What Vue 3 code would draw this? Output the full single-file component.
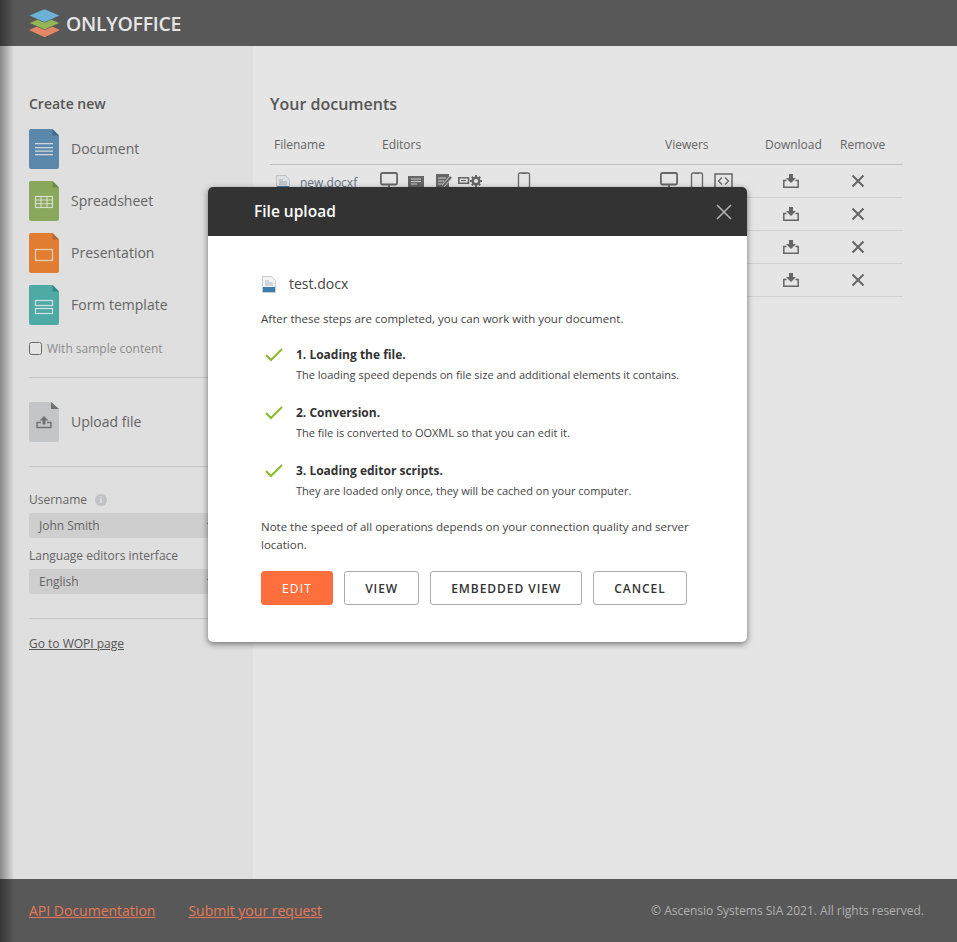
<template>
  <div class="page">
    <header class="top-bar">
      <svg class="logo-mark" width="31" height="29" viewBox="0 0 31 29">
        <path d="M15.500 14.500 1 20.500c-.7.3-.7.7 0 1L14.500 27.800c.6.2 1.400.2 2 0L30 21.500c.7-.3.7-.7 0-1z" fill="#ff9670" />
        <path d="M15.500 7.500 1 13.500c-.7.3-.7.7 0 1L14.500 20.300c.6.2 1.400.2 2 0L30 14.500c.7-.3.7-.7 0-1z" fill="#a4c95e" stroke="#626262" stroke-width=".7" />
        <path d="M14.500.3 1 6c-.7.3-.7.8 0 1.100L14.500 13c.6.2 1.400.2 2 0L30 7.100c.7-.3.7-.8 0-1.100L16.500.3c-.6-.2-1.400-.2-2 0z" fill="#78c6ee" stroke="#626262" stroke-width=".7" />
      </svg>
      <span class="logo-text">ONLYOFFICE</span>
    </header>

    <main class="content">
      <aside class="sidebar">
        <h2 class="side-title">Create new</h2>
        <a v-for="item in createItems" :key="item.name" class="create-row">
          <svg width="30" height="40" viewBox="0 0 30 40">
            <path d="M2 0h21.500L30 6.500V38a2 2 0 0 1-2 2H2a2 2 0 0 1-2-2V2a2 2 0 0 1 2-2z" :fill="item.color" />
            <path d="M23.500 0 30 6.500h-6.500z" :fill="item.fold" />
            <g v-if="item.name === 'Document'" fill="#e6eef4">
              <rect x="6" y="14" width="18" height="1.300" />
              <rect x="6" y="18" width="18" height="1.300" />
              <rect x="6" y="21.500" width="18" height="1.300" />
              <rect x="6" y="25" width="18" height="1.300" />
            </g>
            <g v-else-if="item.name === 'Spreadsheet'" fill="none" stroke="#f2f6e6" stroke-width="1.100">
              <rect x="6.500" y="15.500" width="17" height="11" />
              <path d="M6.500 19h17M6.500 22.800h17M12 15.500v11M18 15.500v11" />
            </g>
            <rect v-else-if="item.name === 'Presentation'" x="6.500" y="16.500" width="17" height="11" fill="none" stroke="#ffe6cc" stroke-width="1.300" />
            <g v-else fill="none" stroke="#eafaf8" stroke-width="1.200">
              <rect x="6.500" y="15.500" width="17" height="5" />
              <rect x="6.500" y="23.500" width="17" height="5" />
            </g>
          </svg>
          <span>{{ item.name }}</span>
        </a>
        <label class="sample-row">
          <input type="checkbox" />
          <span>With sample content</span>
        </label>
        <hr class="side-line first-line" />
        <a class="create-row upload-row">
          <svg width="30" height="40" viewBox="0 0 30 40">
            <path d="M2 0h20.500L30 7v31a2 2 0 0 1-2 2H2a2 2 0 0 1-2-2V2a2 2 0 0 1 2-2z" fill="#d9dbde" />
            <path d="M22 0 30 7h-8z" fill="#7e7e7e" />
            <path d="M15 14l4.500 4.500h-3v4h-3v-4h-3z" fill="#7e7e7e" />
            <path d="M12 20.500H8v5h14v-5H18" fill="none" stroke="#7e7e7e" stroke-width="1.400" />
          </svg>
          <span>Upload file</span>
        </a>
        <hr class="side-line" />
        <div class="field-label user-label">
          Username
          <span class="info-dot">i</span>
        </div>
        <div class="fake-select">John Smith</div>
        <div class="field-label">Language editors interface</div>
        <div class="fake-select">English</div>
        <hr class="side-line last-line" />
        <a class="wopi-link">Go to WOPI page</a>
      </aside>

      <section class="documents">
        <h2 class="docs-title">Your documents</h2>
        <table class="docs-table">
          <thead>
            <tr>
              <th class="col-name">Filename</th>
              <th class="col-editors">Editors</th>
              <th class="col-viewers">Viewers</th>
              <th class="col-download">Download</th>
              <th class="col-remove">Remove</th>
            </tr>
          </thead>
          <tbody>
            <tr v-for="(doc, i) in documents" :key="i">
              <td>
                <div class="cell name-cell">
                  <svg v-if="doc" width="14" height="17" viewBox="0 0 14 17">
                    <path d="M.5.500h9l4 4v12H.5z" fill="#f8f9fa" stroke="#d4d8dc" />
                    <rect x="1" y="11" width="12" height="5" fill="#4088c0" />
                    <path d="M3 5h4M3 7h8M3 9h8" stroke="#b4c0c9" />
                  </svg>
                  <span v-if="doc">{{ doc }}</span>
                </div>
              </td>
              <td>
                <div class="cell editors-cell">
                  <svg width="20" height="20" viewBox="0 0 20 20"><rect x=".9" y="1" width="16.200" height="11.500" rx="1.500" fill="none" stroke="#717171" stroke-width="1.800" /><path d="M9 13v3M5 16h8" stroke="#717171" stroke-width="1.800" /></svg>
                  <svg width="18" height="20" viewBox="0 0 18 20"><path d="M1 4h16v11H1z" fill="#717171" /><path d="M4 7h10M4 9.500h10M4 12h6" stroke="#e5e5e5" /></svg>
                  <svg class="note-icon" width="18" height="20" viewBox="0 0 18 20"><path d="M1 2h13v14H1z" fill="#717171" /><path d="M3 6h8M3 9h6M3 12h4" stroke="#e5e5e5" /><path d="M8 14l8-9" stroke="#e5e5e5" stroke-width="3.500" /><path d="M8 14l8-9" stroke="#717171" stroke-width="2" /></svg>
                  <svg class="macro-icon" width="26" height="20" viewBox="0 0 26 20"><path d="M.8 5.800h9.700v5.400H.8z" fill="none" stroke="#717171" stroke-width="1.600" /><path d="M3 8.500h5" stroke="#717171" stroke-width="1.200" /><circle cx="18" cy="9" r="3.300" fill="none" stroke="#717171" stroke-width="2.400" /><path d="M18 3v2.500M18 12.500V15M12 9h2.500M21.500 9H24M13.800 4.800l1.700 1.700M20.500 11.500l1.700 1.700M13.800 13.200l1.700-1.700M20.500 6.500l1.700-1.700" stroke="#717171" stroke-width="2" /></svg>
                  <svg class="phone-icon" width="14" height="20" viewBox="0 0 14 20"><rect x="1.500" y="1" width="11" height="17" rx="1.500" fill="none" stroke="#717171" stroke-width="1.300" /><path d="M5 1.500h4" stroke="#717171" /></svg>
                </div>
              </td>
              <td>
                <div class="cell viewers-cell">
                  <svg width="20" height="20" viewBox="0 0 20 20"><rect x=".9" y="1" width="16.200" height="11.500" rx="1.500" fill="none" stroke="#717171" stroke-width="1.800" /><path d="M9 13v3M5 16h8" stroke="#717171" stroke-width="1.800" /></svg>
                  <svg width="14" height="20" viewBox="0 0 14 20"><rect x="1.500" y="1" width="11" height="17" rx="1.500" fill="none" stroke="#717171" stroke-width="1.300" /><path d="M5 1.500h4" stroke="#717171" /></svg>
                  <svg width="19" height="20" viewBox="0 0 19 20"><rect x="1" y="2" width="17" height="14" fill="none" stroke="#717171" stroke-width="1.500" /><path d="M8 5.500 4.500 9 8 12.500M11 5.500 14.500 9 11 12.500" fill="none" stroke="#717171" stroke-width="1.300" /></svg>
                </div>
              </td>
              <td>
                <div class="cell download-cell">
                  <svg width="16" height="14" viewBox="0 0 16 14"><path d="M6 0h4v4h3L8 9 3 4h3z" fill="#717171" /><path d="M3.500 6.500H.8v6.700h14.400V6.500h-2.700" fill="none" stroke="#717171" stroke-width="1.500" /></svg>
                </div>
              </td>
              <td>
                <div class="cell remove-cell">
                  <svg width="14" height="14" viewBox="0 0 14 14"><path d="M1.500 1.500l11 11M12.500 1.500l-11 11" stroke="#717171" stroke-width="2" /></svg>
                </div>
              </td>
            </tr>
          </tbody>
        </table>
      </section>
    </main>

    <footer class="bottom-bar">
      <a class="foot-link">API Documentation</a>
      <a class="foot-link">Submit your request</a>
      <span class="copyright">© Ascensio Systems SIA 2021. All rights reserved.</span>
    </footer>

    <div class="overlay"></div>

    <div class="modal">
      <div class="modal-header">
        <span>File upload</span>
        <svg width="16" height="16" viewBox="0 0 16 16"><path d="M1 1l14 14M15 1 1 15" stroke="#b5b5b5" stroke-width="1.500" /></svg>
      </div>
      <div class="modal-body">
        <div class="file-line">
          <svg width="14" height="17" viewBox="0 0 14 17">
            <path d="M.5.500h9l4 4v12H.5z" fill="#f3f4f5" stroke="#c8ccd0" />
            <rect x="1" y="11" width="12" height="5" fill="#3a7cae" />
            <path d="M3 5h4M3 7h8M3 9h8" stroke="#a8b4bd" />
          </svg>
          <span>test.docx</span>
        </div>
        <p class="intro">After these steps are completed, you can work with your document.</p>
        <div v-for="step in steps" :key="step.title" class="step">
          <svg class="check" width="18" height="14" viewBox="0 0 18 14"><path d="M1 7l5 5L17 1" fill="none" stroke="#8dbb2b" stroke-width="2" /></svg>
          <div>
            <div class="step-title">{{ step.title }}</div>
            <div class="step-text">{{ step.text }}</div>
          </div>
        </div>
        <p class="note">Note the speed of all operations depends on your connection quality and server location.</p>
        <div class="buttons">
          <button class="btn btn-orange">EDIT</button>
          <button class="btn">VIEW</button>
          <button class="btn">EMBEDDED VIEW</button>
          <button class="btn">CANCEL</button>
        </div>
      </div>
    </div>
  </div>
</template>

<script setup>
const createItems = [
  { name: 'Document', color: '#6496bd', fold: '#467ba3' },
  { name: 'Spreadsheet', color: '#99bb66', fold: '#7b9c50' },
  { name: 'Presentation', color: '#f98b35', fold: '#c6763e' },
  { name: 'Form template', color: '#57bdb8', fold: '#349793' }
]

// only the first name shows, the modal covers the other three
const documents = ['new.docxf', '', '', '']

const steps = [
  { title: '1. Loading the file.', text: 'The loading speed depends on file size and additional elements it contains.' },
  { title: '2. Conversion.', text: 'The file is converted to OOXML so that you can edit it.' },
  { title: '3. Loading editor scripts.', text: 'They are loaded only once, they will be cached on your computer.' }
]
</script>

<style>
html, body {
  margin: 0;
  height: 100%;
}
</style>

<style scoped>
.page {
  position: relative;
  height: 942px;
  overflow: hidden;
  display: flex;
  flex-direction: column;
  font-family: "Open Sans", sans-serif;
  font-size: 14px;
  color: #707070;
  background: #fff;
}

.top-bar {
  height: 46px;
  flex: none;
  display: flex;
  align-items: center;
  padding-left: 29px;
  background: #626262;
}
.logo-mark {
  margin-right: 6px;
}
.logo-text {
  font-size: 19.5px;
  font-weight: 600;
  letter-spacing: -0.3px;
  color: #fff;
}

.content {
  flex: 1;
  display: flex;
  min-height: 0;
}

.sidebar {
  width: 253px;
  flex: none;
  box-sizing: border-box;
  padding: 48px 0 0 29px;
  background: #f8f8f8;
}
.side-title {
  margin: 0 0 16px;
  font-size: 14px;
  line-height: 19px;
  font-weight: 600;
  color: #606060;
}
.create-row {
  display: flex;
  align-items: center;
  gap: 12px;
  height: 40px;
  margin-bottom: 12px;
}
.create-row span {
  padding-bottom: 2px;
}
.sample-row {
  display: flex;
  align-items: center;
  gap: 5px;
  height: 20px;
  margin-top: 13px;
  font-size: 12px;
  color: #9a9a9a;
}
.sample-row input {
  width: 13px;
  height: 13px;
  margin: 0;
}
.side-line {
  width: 195px;
  height: 1px;
  margin: 0;
  border: 0;
  background: #dcdde0;
}
.first-line {
  margin-top: 19px;
}
.upload-row {
  margin: 24px 0 24px;
}
.field-label {
  font-size: 12px;
  line-height: 17px;
  margin-top: 9px;
  margin-bottom: 5px;
}
.user-label {
  margin-top: 24px;
  display: flex;
  align-items: center;
  gap: 8px;
}
.info-dot {
  width: 12px;
  height: 12px;
  border-radius: 50%;
  background: #d6d8da;
  color: #f8f8f8;
  font-size: 9px;
  line-height: 12px;
  font-weight: 700;
  text-align: center;
}
.fake-select {
  position: relative;
  width: 195px;
  height: 25px;
  box-sizing: border-box;
  padding-left: 10px;
  line-height: 25px;
  font-size: 12px;
  border-radius: 3px;
  background: #e5e5e5;
}
.fake-select::after {
  content: "";
  position: absolute;
  left: 179px;
  top: 8px;
  width: 4px;
  height: 4px;
  border-right: 1px solid #888;
  border-bottom: 1px solid #888;
  transform: rotate(45deg);
}
.last-line {
  margin-top: 24px;
}
.wopi-link {
  display: block;
  margin-top: 16px;
  font-size: 12px;
  line-height: 17px;
  color: #606060;
  text-decoration: underline;
}

.documents {
  flex: 1;
  padding: 47px 54px 0 17px;
}
.docs-title {
  margin: 0 0 20px;
  font-size: 16px;
  line-height: 22px;
  font-weight: 600;
  color: #606060;
}
.docs-table {
  width: 633px;
  border-collapse: collapse;
  table-layout: fixed;
  font-size: 12px;
}
.docs-table th {
  padding: 1px 0 10px;
  line-height: 18px;
  box-sizing: border-box;
  text-align: left;
  font-weight: 400;
  border-bottom: 1px solid #d9d9d9;
}
.docs-table td {
  padding: 0;
  border-bottom: 1px solid #e9e9e9;
}
.docs-table .col-name {
  width: 108px;
  padding-left: 4px;
}
.docs-table .col-editors {
  width: 279px;
  padding-left: 4px;
}
.docs-table .col-viewers {
  width: 96px;
  padding-left: 8px;
}
.docs-table .col-download {
  width: 76px;
  padding-left: 12px;
}
.docs-table .col-remove {
  width: 74px;
  padding-left: 11px;
}
.cell {
  height: 32px;
  box-sizing: border-box;
  display: flex;
  align-items: flex-start;
  overflow: hidden;
}
.name-cell {
  padding: 9px 0 0 6px;
  gap: 10px;
  white-space: nowrap;
  font-size: 12px;
  line-height: 17px;
  color: #6e7f90;
}
.name-cell svg {
  margin-top: 1px;
}
.editors-cell {
  padding: 7px 0 0 2px;
  gap: 7px;
}
.note-icon {
  margin-left: 3px;
}
.macro-icon {
  margin-left: -2px;
}
.phone-icon {
  margin-left: 26px;
}
.viewers-cell {
  padding: 7px 0 0 3px;
  gap: 10px;
}
.download-cell {
  padding: 9px 0 0 30px;
}
.remove-cell {
  padding: 9px 0 0 22px;
}

.bottom-bar {
  height: 63px;
  flex: none;
  display: flex;
  align-items: center;
  gap: 33px;
  padding: 0 33px 0 29px;
  background: #626262;
}
.foot-link {
  color: #ff8763;
  text-decoration: underline;
}
.copyright {
  margin-left: auto;
  font-size: 12px;
  color: #c4c4c4;
}

.overlay {
  position: absolute;
  inset: 0;
  background: linear-gradient(90deg, rgba(0, 0, 0, 0.45), rgba(0, 0, 0, 0.1) 14px);
}

.modal {
  position: absolute;
  left: 208px;
  top: 187px;
  width: 539px;
  border-radius: 5px;
  background: #fff;
  box-shadow: 0 2px 6px rgba(0, 0, 0, 0.5);
  overflow: hidden;
}
.modal-header {
  height: 49px;
  box-sizing: border-box;
  display: flex;
  align-items: center;
  justify-content: space-between;
  padding: 0 15px 2px 46px;
  background: #333;
  color: #fff;
  font-size: 15.5px;
  font-weight: 600;
}
.modal-header svg {
  margin-top: 2px;
}
.modal-body {
  padding: 38px 53px 37px;
  color: #444;
  font-size: 11.5px;
}
.file-line {
  display: flex;
  align-items: center;
  gap: 13px;
  margin-left: 1px;
  font-size: 14px;
  line-height: 20px;
}
.intro {
  margin: 16px 0 19px;
  line-height: 17px;
}
.step {
  display: flex;
  gap: 13px;
  height: 42px;
  margin-bottom: 16px;
  padding-left: 4px;
}
.check {
  margin-top: 2px;
  flex: none;
}
.step-title {
  font-size: 12px;
  font-weight: 700;
  line-height: 18px;
  color: #333;
}
.step-text {
  margin-top: 3px;
  font-size: 11px;
  line-height: 16px;
}
.note {
  margin: -2px 0 17px;
  line-height: 18px;
}
.buttons {
  display: flex;
  gap: 11px;
}
.btn {
  height: 34px;
  padding: 0 20px;
  border: 1px solid #aaa;
  border-radius: 3px;
  background: #fff;
  color: #333;
  font-family: inherit;
  font-size: 12px;
  font-weight: 600;
  letter-spacing: 0.95px;
}
.btn-orange {
  min-width: 72px;
  border-color: #ff6f3d;
  background: #ff6f3d;
  color: #fff;
  font-weight: 400;
  letter-spacing: 1.2px;
}
</style>
